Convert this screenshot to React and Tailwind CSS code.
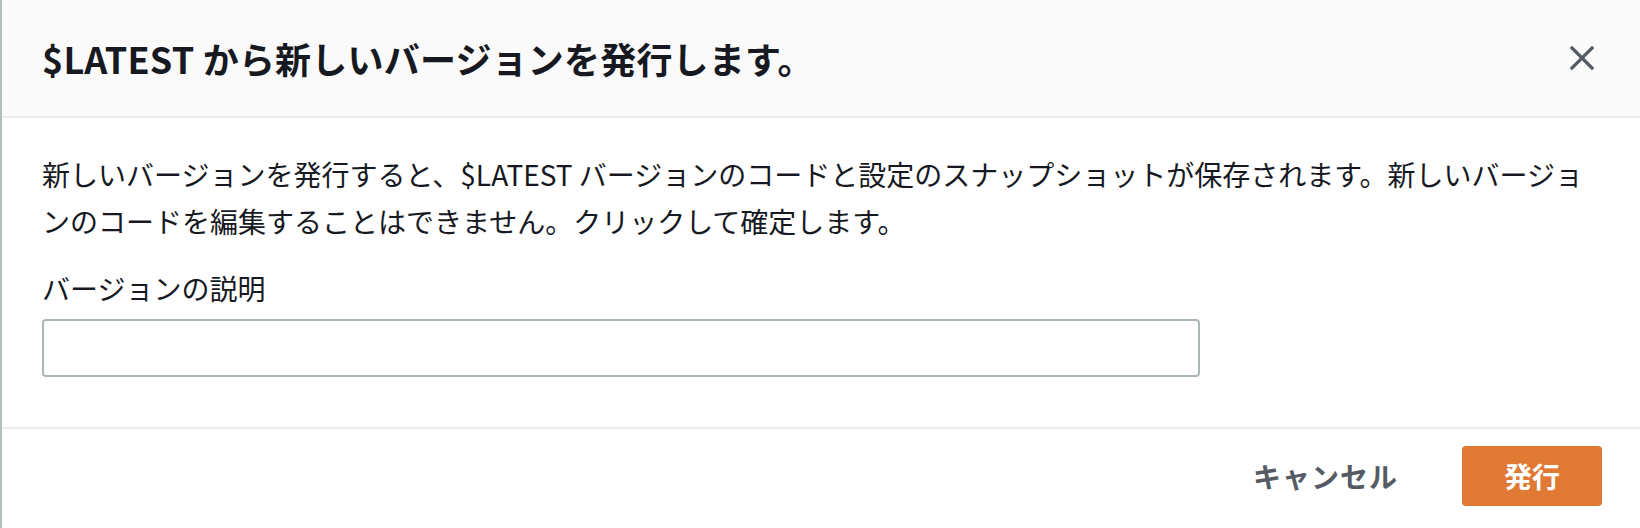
const X = () => (
  <svg width="26" height="26" viewBox="0 0 26 26" fill="none" stroke="#545b64" strokeWidth="3.2" strokeLinecap="square">
    <path d="M3 3 L23 23 M23 3 L3 23" />
  </svg>
);

const App = () => {
  return (
    <div
      className="h-[528px] w-[1640px] overflow-hidden bg-white border-l-2 border-[#b4bcbf] text-[#16191f]"
      style={{ fontFamily: '"Noto Sans CJK JP", "Noto Sans", sans-serif' }}
    >
      {/* Header */}
      <div className="h-[118px] bg-[#fafafa] border-b-2 border-[#eaeded] flex items-center justify-between pl-[40px] pr-[40px]">
        <h2 className="text-[36px] font-bold leading-[44px] tracking-[0.2px]">$LATEST から新しいバージョンを発行します。</h2>
        <button className="flex items-center justify-center w-[36px] h-[36px]">
          <X />
        </button>
      </div>

      {/* Body */}
      <div className="pl-[40px] pr-[40px] pt-[33px] pb-[50px] border-b-2 border-[#eaeded]">
        <p className="text-[28px] leading-[47px]">
          新しいバージョンを発行すると、$LATEST バージョンのコードと設定のスナップショットが保存されます。新しいバージョ
          <br />
          ンのコードを編集することはできません。クリックして確定します。
        </p>
        <label className="block mt-[20px] text-[28px] leading-[46px]">バージョンの説明</label>
        <input
          type="text"
          className="mt-[8px] block w-[1158px] h-[58px] border-2 border-[#aab7b8] rounded-[4px] bg-white px-3 text-[28px] focus:outline-none"
        />
      </div>

      {/* Footer */}
      <div className="flex items-start justify-end pt-[17px] pr-[38px] gap-[64px]">
        <button className="h-[60px] text-[28px] font-bold text-[#545b64] tracking-[1px]">キャンセル</button>
        <button className="h-[60px] w-[140px] rounded-[4px] bg-[#df7934] text-white text-[28px] font-bold">発行</button>
      </div>
    </div>
  );
};

export default App;
